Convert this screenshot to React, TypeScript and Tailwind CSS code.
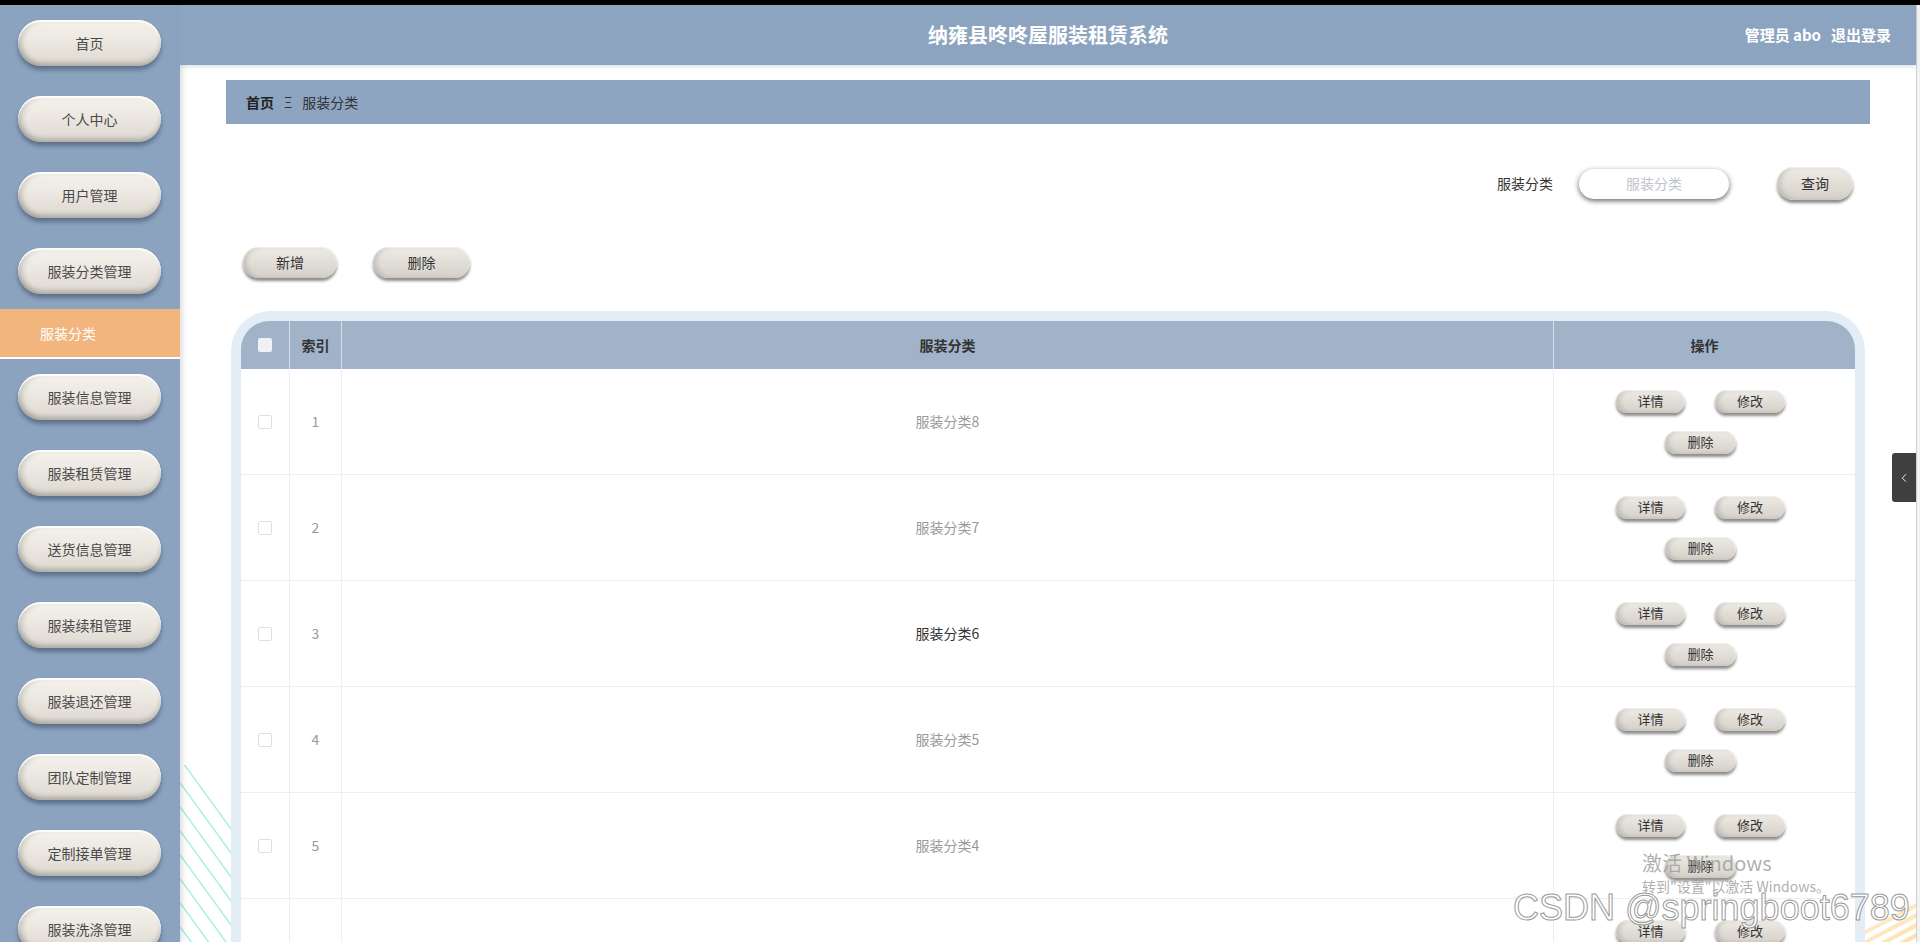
import { ChevronLeft } from "lucide-react";

const before = ["首页", "个人中心", "用户管理", "服装分类管理"];
const after = [
  "服装信息管理",
  "服装租赁管理",
  "送货信息管理",
  "服装续租管理",
  "服装退还管理",
  "团队定制管理",
  "定制接单管理",
  "服装洗涤管理",
];

const rows = [
  { idx: 1, name: "服装分类8" },
  { idx: 2, name: "服装分类7" },
  { idx: 3, name: "服装分类6", hover: true },
  { idx: 4, name: "服装分类5" },
  { idx: 5, name: "服装分类4" },
  { idx: 6, name: "服装分类3" },
];

function SideButton({ label }: { label: string }) {
  return (
    <div className="py-[15px] pl-[18px]">
      <div className="flex h-[46px] w-[143px] items-center justify-center rounded-full bg-linear-to-b from-[#f4f1ec] via-[#ebe7e0] to-[#dcd8d0] text-[14px] text-[#4a4a4a] shadow-[0_4px_4px_rgba(40,50,70,0.45),inset_0_2px_1px_rgba(255,255,255,0.95),inset_5px_0_5px_rgba(0,0,0,0.12),inset_0_-4px_4px_rgba(0,0,0,0.15)]">
        {label}
      </div>
    </div>
  );
}

function PillButton({ label, className }: { label: string; className: string }) {
  return (
    <button
      type="button"
      className={
        "flex items-center justify-center rounded-full bg-linear-to-b from-[#eeebe5] to-[#d5d1c9] text-[#333] shadow-[0_3px_3px_rgba(0,0,0,0.45),inset_4px_0_4px_rgba(0,0,0,0.12),inset_0_1px_1px_rgba(255,255,255,0.9)] " +
        className
      }
    >
      {label}
    </button>
  );
}

export default function App() {
  return (
    <div className="relative flex h-[942px] flex-col overflow-hidden bg-white font-['Microsoft_YaHei','Noto_Sans_CJK_SC',sans-serif]">
      <div className="h-[5px] shrink-0 bg-black" />
      <div className="flex min-h-0 flex-1">
        <aside className="z-10 w-[180px] shrink-0 bg-[#8ba3bf] shadow-[2px_0_6px_rgba(0,0,0,0.15)]">
          {before.map((l) => (
            <SideButton key={l} label={l} />
          ))}
          <div className="flex h-[50px] items-center border-b-2 border-white bg-[#f1b57d] pl-[40px] text-[14px] text-white">
            服装分类
          </div>
          {after.map((l) => (
            <SideButton key={l} label={l} />
          ))}
        </aside>

        <main className="relative flex min-w-0 flex-1 flex-col">
          <header className="relative z-10 flex h-[60px] shrink-0 items-center justify-center bg-[#8da4c0] shadow-[0_2px_4px_rgba(120,150,190,0.25)]">
            <h1 className="text-[20px] font-bold text-white">纳雍县咚咚屋服装租赁系统</h1>
            <div className="absolute right-[25px] top-0 flex h-full items-center gap-[10px] text-[15px] font-bold text-white">
              <span>管理员 abo</span>
              <span>退出登录</span>
            </div>
          </header>

          <div className="relative flex-1 px-[46px] pt-[15px]">
            {/* background decorations */}
            <svg className="absolute left-0 top-[700px] h-[240px] w-[60px]" viewBox="0 0 60 240">
              {[0, 1, 2, 3, 4, 5, 6, 7, 8].map((i) => (
                <line
                  key={i}
                  x1={-10}
                  y1={i * 24 - 20}
                  x2={70}
                  y2={i * 24 + 90}
                  stroke="#a8f0e2"
                  strokeWidth="1.5"
                />
              ))}
            </svg>
            <svg className="absolute bottom-0 right-0 h-[112px] w-[56px]" viewBox="0 0 56 112">
              <defs>
                <linearGradient id="st" x1="0" y1="0" x2="1" y2="1">
                  <stop offset="0" stopColor="#fde7a8" />
                  <stop offset="1" stopColor="#f8c36a" />
                </linearGradient>
              </defs>
              {[0, 1, 2, 3, 4, 5, 6, 7].map((i) => (
                <polygon
                  key={i}
                  points={`0,${40 + i * 10} 56,${10 + i * 10} 56,${15 + i * 10} 0,${44 + i * 10}`}
                  fill="url(#st)"
                  opacity={0.5 + i * 0.06}
                />
              ))}
            </svg>

            <div className="relative flex h-[44px] items-center gap-[10px] bg-[#8ea5c1] pl-[20px] text-[14px]">
              <span className="font-bold text-[#222]">首页</span>
              <span className="text-[#333]">Ξ</span>
              <span className="text-[#333]">服装分类</span>
            </div>

            <div className="relative mt-[43px] flex h-[33px] items-center justify-end pr-[17px]">
              <span className="text-[14px] text-[#333]">服装分类</span>
              <div className="ml-[26px] flex h-[30px] w-[150px] items-center justify-center rounded-full bg-white text-[14px] text-[#c0c4cc] shadow-[0_3px_4px_rgba(0,0,0,0.4),-3px_0_4px_rgba(0,0,0,0.12),3px_0_4px_rgba(0,0,0,0.12)]">
                服装分类
              </div>
              <PillButton label="查询" className="ml-[48px] h-[33px] w-[76px] text-[14px]" />
            </div>

            <div className="relative mt-[47px] flex items-center gap-[36px] pl-[17px]">
              <PillButton label="新增" className="h-[31px] w-[94px] text-[14px]" />
              <PillButton label="删除" className="h-[31px] w-[97px] text-[14px]" />
            </div>

            <div className="relative mx-[5px] mt-[33px] rounded-t-[40px] bg-[#e3edf6] px-[10px] pt-[10px]">
              <div className="overflow-hidden rounded-t-[28px] bg-white">
                <div className="grid h-[48px] grid-cols-[49px_52px_1fr_301px] bg-[#a1b3c9] text-[14px] font-bold text-[#333]">
                  <div className="flex items-center justify-center border-r border-[#d6dee8]">
                    <span className="h-[14px] w-[14px] rounded-[2px] bg-[#eef1f6]" />
                  </div>
                  <div className="flex items-center justify-center border-r border-[#d6dee8]">索引</div>
                  <div className="flex items-center justify-center border-r border-[#d6dee8]">服装分类</div>
                  <div className="flex items-center justify-center">操作</div>
                </div>
                {rows.map((r) => (
                  <div
                    key={r.idx}
                    className="grid h-[106px] grid-cols-[49px_52px_1fr_301px] border-b border-[#ebeef5] text-[14px]"
                  >
                    <div className="flex items-center justify-center border-r border-[#ebeef5]">
                      <span className="h-[14px] w-[14px] rounded-[2px] border border-[#dcdfe6] bg-white" />
                    </div>
                    <div className="flex items-center justify-center border-r border-[#ebeef5] text-[#999]">
                      {r.idx}
                    </div>
                    <div
                      className={
                        "flex items-center justify-center border-r border-[#ebeef5] " +
                        (r.hover ? "text-[#333]" : "text-[#999]")
                      }
                    >
                      {r.name}
                    </div>
                    <div className="flex flex-col items-center justify-center gap-[18px] pr-[8px]">
                      <div className="flex gap-[30px]">
                        <PillButton label="详情" className="h-[23px] w-[69px] text-[13px]" />
                        <PillButton label="修改" className="h-[23px] w-[70px] text-[13px]" />
                      </div>
                      <PillButton label="删除" className="h-[23px] w-[71px] text-[13px]" />
                    </div>
                  </div>
                ))}
              </div>
            </div>
          </div>

          <div className="absolute right-0 top-[448px] z-20 flex h-[49px] w-[24px] items-center justify-center rounded-l-[3px] bg-[#3f3f3f] text-white">
            <ChevronLeft size={14} strokeWidth={1.5} />
          </div>
        </main>
        <div className="w-[4px] shrink-0 border-l border-[#d0d0d0] bg-[#f2f2f2]" />
      </div>

      {/* overlays from the captured screen */}
      <div className="pointer-events-none absolute left-[1642px] top-[850px] z-30 whitespace-nowrap text-[#9a9a9a]/80">
        <div className="text-[20px] leading-[26px]">激活 Windows</div>
        <div className="text-[14px] leading-[20px]">转到"设置"以激活 Windows。</div>
      </div>
      <div className="pointer-events-none absolute left-[1513px] top-[886px] z-30 whitespace-nowrap font-['Liberation_Sans',sans-serif] text-[36px] leading-[44px] text-white/90 [-webkit-text-stroke:1px_#9a9a9a]">
        CSDN @springboot6789
      </div>
    </div>
  );
}
